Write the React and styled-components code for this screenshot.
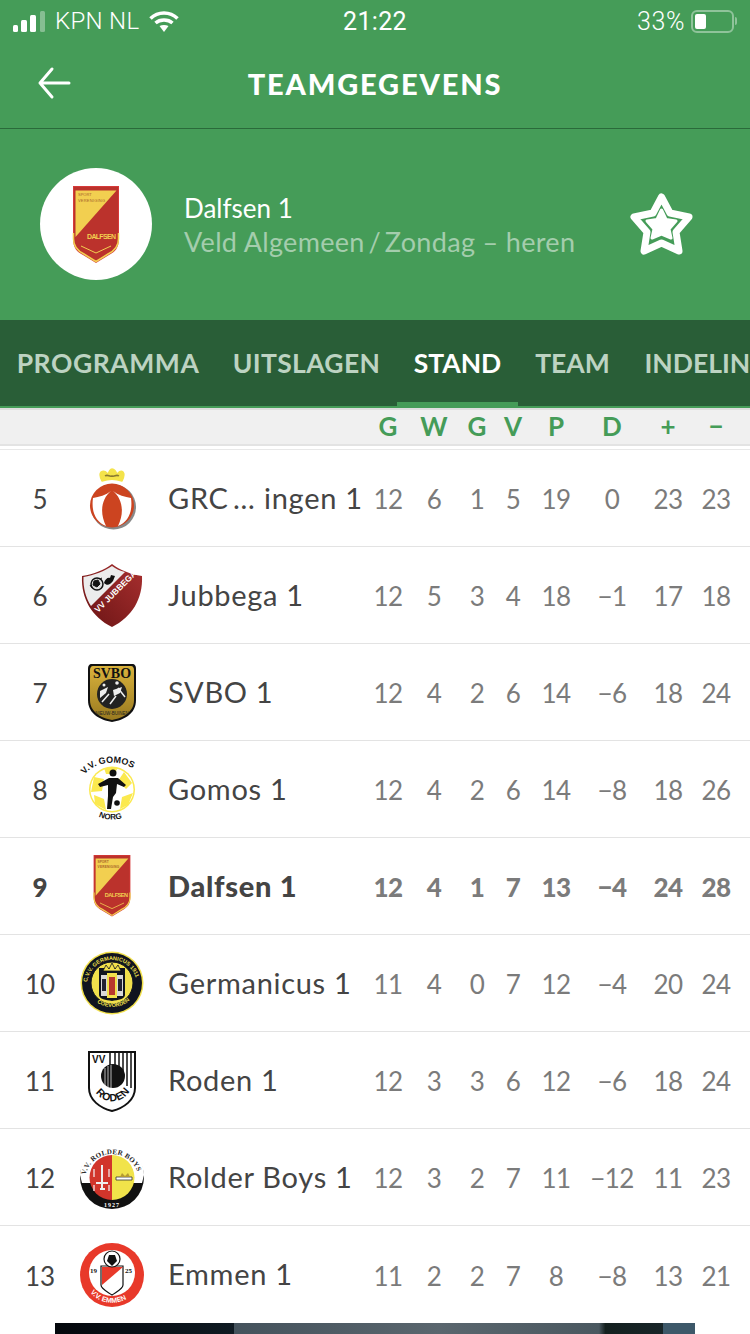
import React from "react";
import styled, { createGlobalStyle } from "styled-components";

const GREEN = "#459c58";
const COLUMNS = "80px 64px 221px 46px 46px 40px 32px 54px 58px 54px 42px";

const DalfsenLogo = ({ width }) => (
  <svg width={width} viewBox="0 0 50 77">
    <path d="M2 0H48V52C48 62 44 66 38 69L25 77L12 69C6 66 2 62 2 52Z" fill="#d63a3a" />
    <path d="M3 1H47V52C47 61 43 65 37 68L25 75L13 68C7 65 3 61 3 52Z" fill="#bb322c" />
    <path d="M4.500 4.500H45.500L4.500 51Z" fill="#f2cf50" />
    <path d="M2.500 47V53C2.500 61 7 65 13 68L25 75.500L37 68C43 65 47.500 61 47.500 53V47" fill="none" stroke="#f2cf50" strokeWidth="1.500" />
    <path d="M10 60L25 67L40 60" fill="none" stroke="#f2cf50" strokeWidth="1" />
    <text x="7" y="10" fontSize="4" fill="#a8642a" fontFamily="Liberation Sans, sans-serif">SPORT</text>
    <text x="7" y="16" fontSize="4" textLength="27" fill="#a8642a" fontFamily="Liberation Sans, sans-serif">VERENIGING</text>
    <text x="16" y="53" fontSize="7" textLength="29" fontWeight="700" fill="#f2cf50" fontFamily="Liberation Sans, sans-serif">DALFSEN</text>
  </svg>
);

const GrcLogo = () => (
  <svg width="64" height="64" viewBox="0 0 64 64">
    <path d="M22 15C20 11 19 8 21 6C24 4 27 6 28 9C29 5 31 3 32 3C34 3 36 5 37 9C38 6 41 4 43 6C45 8 44 11 42 15C36 13 28 13 22 15Z" fill="#f4e34a" stroke="#f4e34a" strokeWidth="1.500" strokeLinejoin="round" />
    <path d="M25 10C28 8 29 11 32 10C35 11 36 8 39 10" fill="none" stroke="#8a7a30" strokeWidth="1.500" />
    <circle cx="33.500" cy="41" r="22.500" fill="#888" />
    <circle cx="32" cy="39.500" r="22" fill="#cc4420" />
    <path d="M31 25C22 32 19 46 26 60C16 56 11 46 13 32C19 31 26 29 31 25Z" fill="#fff" />
    <path d="M33 25C42 32 45 46 38 60C48 56 53 46 51 32C45 31 38 29 33 25Z" fill="#fff" />
  </svg>
);

const JubbegaLogo = () => (
  <svg width="64" height="64" viewBox="0 0 64 64">
    <defs>
      <linearGradient id="jubbega" x1="1" y1="0" x2="0" y2="1">
        <stop offset="0" stopColor="#a82f2f" />
        <stop offset="1" stopColor="#6a1414" />
      </linearGradient>
    </defs>
    <path d="M32 1C40 7 50 11 62 13C63 36 52 54 32 64C12 54 1 36 2 13C14 11 24 7 32 1Z" fill="url(#jubbega)" />
    <path d="M32 3C25 8 14 12 3.500 14C3 25 6 35 11 43L45 9C40 8 36 6 32 3Z" fill="#ececec" />
    <circle cx="17" cy="21" r="6" fill="#ddd" stroke="#111" strokeWidth="1.500" />
    <path d="M14 18L18 17L20 21L17 24L13 22ZM10 22L12 25M20 16L22 15" stroke="#111" strokeWidth="1" fill="#111" />
    <path d="M24 20C25 16 28 14 30 15L31 12L35 13L33 18C30 22 27 23 24 20Z" fill="#111" />
    <text transform="translate(18 50) rotate(-45)" fontSize="8.500" fontWeight="700" fill="#fff" fontFamily="Liberation Sans, sans-serif">VV JUBBEGA</text>
  </svg>
);

const SvboLogo = () => (
  <svg width="64" height="64" viewBox="0 0 64 64">
    <defs>
      <linearGradient id="svbo" x1="0" y1="0" x2="0" y2="1">
        <stop offset="0" stopColor="#d9b23c" />
        <stop offset="1" stopColor="#9a7a20" />
      </linearGradient>
    </defs>
    <path d="M12 4H52C55 4 56 6 56 9V40C56 54 44 60 32 62C20 60 8 54 8 40V9C8 6 9 4 12 4Z" fill="#111" />
    <path d="M13 6H51C53 6 54 8 54 10V40C54 52 43 58 32 60C21 58 10 52 10 40V10C10 8 11 6 13 6Z" fill="url(#svbo)" />
    <text x="32" y="18" textAnchor="middle" fontSize="14" fontWeight="700" fill="#111" fontFamily="Liberation Serif, serif">SVBO</text>
    <circle cx="32" cy="34" r="15" fill="#222" />
    <path d="M20 31L28 27L26 33L20 38ZM33 30L42 27L40 33L34 36Z" fill="#eee" />
    <path d="M22 42L29 34M30 44L36 36M38 28L45 37" stroke="#eee" strokeWidth="1.500" />
    <circle cx="37" cy="23" r="1.800" fill="#eee" />
    <circle cx="24" cy="25" r="1.500" fill="#eee" />
    <text x="32" y="55" textAnchor="middle" fontSize="4.500" fill="#222" fontFamily="Liberation Sans, sans-serif">NIEUW-BUINEN</text>
  </svg>
);

const GomosLogo = () => (
  <svg width="64" height="64" viewBox="0 0 64 64">
    <defs>
      <path id="gomosTop" d="M3 20C14 1 50 1 62 20" />
      <path id="gomosBottom" d="M16 58C25 64 39 64 49 58" />
    </defs>
    <circle cx="32" cy="32.500" r="23" fill="#fbe94e" />
    <circle cx="32" cy="32.500" r="21.500" fill="#fff" />
    <path d="M14 20L24 22L22 34L11 35ZM44 15L52 26L46 32L38 24ZM14 38L24 42L26 53L15 47ZM42 40L53 36L48 48L40 52Z" fill="#fbe94e" />
    <path d="M24 11L38 11L34 17L26 17Z" fill="#fbe94e" />
    <circle cx="33" cy="16" r="3.500" fill="#111" />
    <path d="M18 27L29 21H38L46 28L44 30L37 27L36 36L33 40L31 52H27L28 39L28 28L20 30Z" fill="#111" />
    <circle cx="37" cy="46" r="2.800" fill="#111" />
    <text fontSize="9" fontWeight="700" fill="#111" fontFamily="Liberation Sans, sans-serif">
      <textPath href="#gomosTop" startOffset="3">V.V. GOMOS</textPath>
    </text>
    <text fontSize="8" fontWeight="700" fill="#111" fontFamily="Liberation Sans, sans-serif">
      <textPath href="#gomosBottom" startOffset="3">NORG</textPath>
    </text>
  </svg>
);

const GermanicusLogo = () => (
  <svg width="64" height="64" viewBox="0 0 64 64">
    <defs>
      <path id="germanicusTop" d="M7 34A25 25 0 0 1 57 34" />
      <path id="germanicusBottom" d="M13 47C20 59 44 59 51 47" />
    </defs>
    <circle cx="32" cy="32" r="31.500" fill="#f1e04c" />
    <circle cx="32" cy="32" r="30" fill="#10141f" />
    <circle cx="32" cy="32" r="21" fill="#f1e04c" stroke="#10141f" strokeWidth="1" />
    <path d="M19 17H45V44C45 48 38 49 32 50C26 49 19 48 19 44Z" fill="#10141f" />
    <rect x="21" y="24" width="22" height="21" fill="#d8d8d8" />
    <rect x="27" y="22" width="10" height="25" fill="#f1e04c" />
    <path d="M29 26H35V44H29Z" fill="#b9382e" />
    <path d="M22 28H26V40H22ZM38 28H42V40H38Z" fill="#223" />
    <path d="M23 20L26 14L29 18L32 12L35 18L38 14L41 20Z" fill="#f1e04c" stroke="#10141f" strokeWidth="0.800" />
    <text fontSize="5.500" fill="#f1e04c" fontWeight="700" fontFamily="Liberation Sans, sans-serif">
      <textPath href="#germanicusTop" startOffset="3">C.V.V. GERMANICUS 1911</textPath>
    </text>
    <text fontSize="5.500" fill="#f1e04c" fontWeight="700" fontFamily="Liberation Sans, sans-serif">
      <textPath href="#germanicusBottom" startOffset="6">COEVORDEN</textPath>
    </text>
  </svg>
);

const RodenLogo = () => (
  <svg width="64" height="64" viewBox="0 0 64 64">
    <defs>
      <path id="rodenBottom" d="M13 39C20 58 44 58 52 39" />
    </defs>
    <path d="M9 4H55V40C55 52 44 60 32 63C20 60 9 52 9 40Z" fill="#fff" stroke="#111" strokeWidth="2" />
    <path d="M30 4V24M35 4V24M39 4V24M43 4V32M47 4V38M51 4V40" stroke="#111" strokeWidth="1.500" />
    <circle cx="33" cy="28" r="12" fill="#111" />
    <path d="M25 20V38M28 18V40M31 17V41" stroke="#fff" strokeWidth="0.700" />
    <text x="12" y="15" fontSize="10" fontWeight="700" fill="#111" fontFamily="Liberation Sans, sans-serif">VV</text>
    <text fontSize="10.500" fontWeight="700" fill="#111" letterSpacing="0.600" fontFamily="Liberation Sans, sans-serif">
      <textPath href="#rodenBottom" startOffset="6">RODEN</textPath>
    </text>
  </svg>
);

const RolderLogo = () => (
  <svg width="64" height="64" viewBox="0 0 64 64">
    <defs>
      <path id="rolderTop" d="M5 36A27 27 0 0 1 59 36" />
    </defs>
    <circle cx="32" cy="32" r="32" fill="#111" />
    <path d="M0 30A32 32 0 0 1 64 30L62 38H2Z" fill="#fff" />
    <path d="M32 10A22.500 22.500 0 0 0 32 55Z" fill="#d1352b" />
    <path d="M32 10A22.500 22.500 0 0 1 32 55Z" fill="#f1e34a" />
    <path d="M22 20V45M16 38H28M20 44H25" stroke="#eee" strokeWidth="2" />
    <path d="M14 24V32M29 24V32M14 40V46M29 40V46" stroke="#ecc" strokeWidth="1.500" />
    <path d="M36 32H52V35H36Z" fill="#fff" stroke="#333" strokeWidth="0.800" />
    <path d="M40 32L42 28L45 31L48 28L50 32Z" fill="#b59a30" />
    <text fontSize="7" fontWeight="700" fill="#222" letterSpacing="0.300" fontFamily="Liberation Serif, serif">
      <textPath href="#rolderTop" startOffset="6">V.V. ROLDER BOYS</textPath>
    </text>
    <text x="32" y="62" textAnchor="middle" fontSize="6" fontWeight="700" fill="#fff" letterSpacing="1" fontFamily="Liberation Serif, serif">1927</text>
  </svg>
);

const EmmenLogo = () => (
  <svg width="64" height="64" viewBox="0 0 64 64">
    <defs>
      <path id="emmenBottom" d="M7 41C12 66 52 66 57 41" />
    </defs>
    <circle cx="32" cy="32" r="32" fill="#e8392a" />
    <circle cx="32" cy="30" r="23" fill="#fff" />
    <path d="M21 23H43V42C43 46 36 49 32 52C28 49 21 46 21 42Z" fill="#fff" stroke="#111" strokeWidth="1.200" />
    <path d="M22 42V24H43Z" fill="#e8392a" />
    <circle cx="32" cy="16" r="8" fill="#fff" stroke="#111" strokeWidth="1.200" />
    <path d="M29 12H35L37 18L32 23L27 18Z" fill="#111" />
    <text x="10" y="30" fontSize="7" fontWeight="700" fill="#111" fontFamily="Liberation Serif, serif">19</text>
    <text x="45" y="30" fontSize="7" fontWeight="700" fill="#111" fontFamily="Liberation Serif, serif">25</text>
    <text fontSize="7" fontWeight="700" fill="#fff" fontFamily="Liberation Sans, sans-serif">
      <textPath href="#emmenBottom" startOffset="9">V.V. EMMEN</textPath>
    </text>
  </svg>
);

const rows = [
  { rank: 5, name: "GRC\u2009…\u2009\u2009ingen 1", logo: <GrcLogo />, stats: [12, 6, 1, 5, 19, "0", 23, 23] },
  { rank: 6, name: "Jubbega 1", logo: <JubbegaLogo />, stats: [12, 5, 3, 4, 18, "−1", 17, 18] },
  { rank: 7, name: "SVBO 1", logo: <SvboLogo />, stats: [12, 4, 2, 6, 14, "−6", 18, 24] },
  { rank: 8, name: "Gomos 1", logo: <GomosLogo />, stats: [12, 4, 2, 6, 14, "−8", 18, 26] },
  { rank: 9, name: "Dalfsen 1", logo: <DalfsenLogo width={40} />, stats: [12, 4, 1, 7, 13, "−4", 24, 28], own: true },
  { rank: 10, name: "Germanicus 1", logo: <GermanicusLogo />, stats: [11, 4, 0, 7, 12, "−4", 20, 24] },
  { rank: 11, name: "Roden 1", logo: <RodenLogo />, stats: [12, 3, 3, 6, 12, "−6", 18, 24] },
  { rank: 12, name: "Rolder Boys 1", logo: <RolderLogo />, stats: [12, 3, 2, 7, 11, "−12", 11, 23] },
  { rank: 13, name: "Emmen 1", logo: <EmmenLogo />, stats: [11, 2, 2, 7, 8, "−8", 13, 21] },
];

const tabs = [
  { label: "PROGRAMMA", width: 216, tracking: 0.55 },
  { label: "UITSLAGEN", width: 181, tracking: 0.35 },
  { label: "STAND", width: 121, tracking: 0, active: true },
  { label: "TEAM", width: 109, tracking: 0 },
  { label: "INDELING", width: 160, tracking: 0 },
];
const headings = ["G", "W", "G", "V", "P", "D", "+", "−"];

const App = () => {
  return (
    <Page>
      <GlobalStyle />
      <GreenTop>
        <StatusBar>
          <StatusLeft>
            <svg width="32" height="21" viewBox="0 0 32 21">
              <rect x="0" y="14" width="5" height="7" rx="1.500" fill="#fff" />
              <rect x="8" y="9" width="6" height="12" rx="1.500" fill="#fff" />
              <rect x="17" y="4" width="6" height="17" rx="1.500" fill="#fff" />
              <rect x="27" y="0" width="5" height="21" rx="1.500" fill="#fff" opacity="0.35" />
            </svg>
            <StatusText>KPN NL</StatusText>
            <svg width="30" height="21" viewBox="0 0 30 21">
              <path d="M1.500 7.500C9 0 21 0 28.500 7.500" fill="none" stroke="#fff" strokeWidth="3.500" />
              <path d="M6.500 12C11 8 19 8 23.500 12" fill="none" stroke="#fff" strokeWidth="3.500" />
              <path d="M10.500 15C13 13.500 17 13.500 19.500 15L15 21Z" fill="#fff" />
            </svg>
          </StatusLeft>
          <StatusTime>21:22</StatusTime>
          <StatusRight>
            <BatteryText>33%</BatteryText>
            <Battery>
              <BatteryLevel />
            </Battery>
            <BatteryNub />
          </StatusRight>
        </StatusBar>
        <NavBar>
          <BackButton>
            <svg width="32" height="32" viewBox="0 0 32 32">
              <path d="M31 16H2M14 2L2 16L14 30" fill="none" stroke="#fff" strokeWidth="3" strokeLinecap="round" strokeLinejoin="round" />
            </svg>
          </BackButton>
          <Title>TEAMGEGEVENS</Title>
        </NavBar>
        <TeamPanel>
          <Crest>
            <DalfsenLogo width={50} />
          </Crest>
          <TeamInfo>
            <TeamName>Dalfsen 1</TeamName>
            <TeamMeta>Veld Algemeen{"\u2009/\u2009"}Zondag – heren</TeamMeta>
          </TeamInfo>
          <StarButton>
            <svg width="66" height="66" viewBox="0 0 66 66">
              <path d="M32.500 6L41 22L60 26L47 41L50 60L32.500 52L15 60L18 41L5 26L24 22Z" fill="none" stroke="#fff" strokeWidth="7" strokeLinejoin="round" />
              <path d="M32.500 19L37 28.500L47 30L40 38L42 47L32.500 43L23 47L25 38L18 30L28 28.500Z" fill="#fff" stroke="#fff" strokeWidth="3" strokeLinejoin="round" />
            </svg>
          </StarButton>
        </TeamPanel>
      </GreenTop>
      <TabBar>
        {tabs.map((tab) => (
          <Tab key={tab.label} $active={tab.active} $width={tab.width} $tracking={tab.tracking}>{tab.label}</Tab>
        ))}
      </TabBar>
      <TableHead>
        {headings.map((h, i) => (
          <HeadCell key={i} $column={i + 4}>{h}</HeadCell>
        ))}
      </TableHead>
      <Table>
        {rows.map((row) => (
          <Row key={row.rank} $own={row.own}>
            <Rank>{row.rank}</Rank>
            <LogoCell>{row.logo}</LogoCell>
            <Name>{row.name}</Name>
            {row.stats.map((stat, i) => (
              <Stat key={i}>{stat}</Stat>
            ))}
          </Row>
        ))}
      </Table>
      <AdBanner />
    </Page>
  );
};
export default App;

const GlobalStyle = createGlobalStyle`
  html, body {
    margin: 0;
    padding: 0;
    background: #fff;
  }
  svg {
    display: block;
    overflow: visible;
  }
`;

const Page = styled.div`
  width: 750px;
  height: 1334px;
  overflow: hidden;
  font-family: "Lato", "Liberation Sans", sans-serif;
  background: #fff;
`;

const GreenTop = styled.div`
  background: ${GREEN};
  color: #fff;
`;

const StatusBar = styled.div`
  height: 38px;
  padding: 2px 13px 0;
  display: grid;
  grid-template-columns: 1fr auto 1fr;
  align-items: center;
`;

const StatusLeft = styled.div`
  display: flex;
  align-items: center;
  gap: 10px;
`;

const StatusRight = styled.div`
  display: flex;
  align-items: center;
  justify-content: flex-end;
`;

const StatusText = styled.span`
  font-family: "Roboto", sans-serif;
  font-size: 24px;
  font-weight: 300;
  letter-spacing: 0.3px;
`;

const BatteryText = styled(StatusText)`
  font-size: 25px;
  letter-spacing: 0.6px;
  margin-right: 6px;
`;

const StatusTime = styled.span`
  font-family: "Roboto", sans-serif;
  font-size: 25px;
  font-weight: 400;
  letter-spacing: 0.3px;
`;

const Battery = styled.div`
  width: 43px;
  height: 23px;
  box-sizing: border-box;
  padding: 2px;
  border: 2px solid rgba(255, 255, 255, 0.4);
  border-radius: 6px;
`;

const BatteryLevel = styled.div`
  width: 11px;
  height: 100%;
  background: #fff;
  border-radius: 2px;
`;

const BatteryNub = styled.div`
  width: 2px;
  height: 8px;
  margin-left: 1px;
  background: rgba(255, 255, 255, 0.4);
  border-radius: 0 2px 2px 0;
`;

const NavBar = styled.div`
  height: 88px;
  position: relative;
  display: flex;
  align-items: center;
  justify-content: center;
  border-bottom: 1px solid #2a6a3a;
`;

const BackButton = styled.div`
  position: absolute;
  left: 38px;
  top: 27px;
`;

const Title = styled.h1`
  margin: 0 0 2px;
  font-size: 29px;
  font-weight: 900;
  letter-spacing: 1.85px;
`;

const TeamPanel = styled.div`
  height: 191px;
  padding: 0 55px 1px 40px;
  display: flex;
  align-items: center;
  box-sizing: border-box;
`;

const Crest = styled.div`
  width: 112px;
  height: 112px;
  border-radius: 50%;
  background: #fff;
  display: flex;
  align-items: center;
  justify-content: center;
`;

const TeamInfo = styled.div`
  flex: 1;
  margin-left: 32px;
  padding-top: 2px;
`;

const TeamName = styled.div`
  font-size: 26px;
  line-height: 34px;
  color: #fff;
`;

const TeamMeta = styled.div`
  font-size: 27px;
  line-height: 34px;
  letter-spacing: 0.33px;
  color: #a4cdad;
  white-space: nowrap;
`;

const StarButton = styled.div`
  flex: none;
`;

const TabBar = styled.div`
  height: 86px;
  display: flex;
  background: #295e37;
  border-bottom: 2px solid ${GREEN};
  box-shadow: 0 2px 0 #dedede;
  overflow: hidden;
  position: relative;
`;

const Tab = styled.div`
  flex: none;
  width: ${(p) => p.$width}px;
  height: 86px;
  box-sizing: border-box;
  padding-top: 4px;
  display: flex;
  align-items: center;
  justify-content: center;
  white-space: nowrap;
  font-size: 26.500px;
  font-weight: 700;
  letter-spacing: ${(p) => p.$tracking}px;
  color: ${(p) => (p.$active ? "#fff" : "#bdd3c2")};
  border-bottom: 4px solid ${(p) => (p.$active ? GREEN : "transparent")};
`;

const TableHead = styled.div`
  height: 36px;
  display: grid;
  grid-template-columns: ${COLUMNS};
  align-items: center;
  background: #f0f0f0;
  border-bottom: 2px solid #e3e3e3;
`;

const HeadCell = styled.div`
  grid-column: ${(p) => p.$column};
  text-align: center;
  font-size: 26px;
  font-weight: 700;
  color: ${GREEN};
`;

const Table = styled.div`
  margin-top: 3px;
  border-top: 1px solid #e8e8e8;
`;

const Row = styled.div`
  height: 97px;
  box-sizing: border-box;
  display: grid;
  grid-template-columns: ${COLUMNS};
  align-items: center;
  border-bottom: 1px solid #e3e3e3;
  font-weight: ${(p) => (p.$own ? 900 : 400)};

  &:last-child {
    border-bottom: 0;
  }
`;

const Rank = styled.div`
  padding-top: 2px;
  text-align: center;
  font-size: 26px;
  color: #444;
`;

const LogoCell = styled.div`
  display: flex;
  justify-content: center;
`;

const Name = styled.div`
  padding: 0 0 2px 25px;
  margin-left: -1px;
  font-size: 29px;
  letter-spacing: 0.7px;
  color: #444;
  white-space: nowrap;
`;

const Stat = styled.div`
  padding-top: 2px;
  text-align: center;
  font-size: 26px;
  letter-spacing: -0.5px;
  color: #7b7b7b;
`;

const AdBanner = styled.div`
  width: 640px;
  height: 40px;
  margin: 0 0 0 55px;
  background: linear-gradient(90deg, #04070c 0, #0f1a22 28%, #44525c 28%, #5a666e 60%, #4a5860 85%, #14201f 86%, #182528 95%, #3d5869 95%);
`;
